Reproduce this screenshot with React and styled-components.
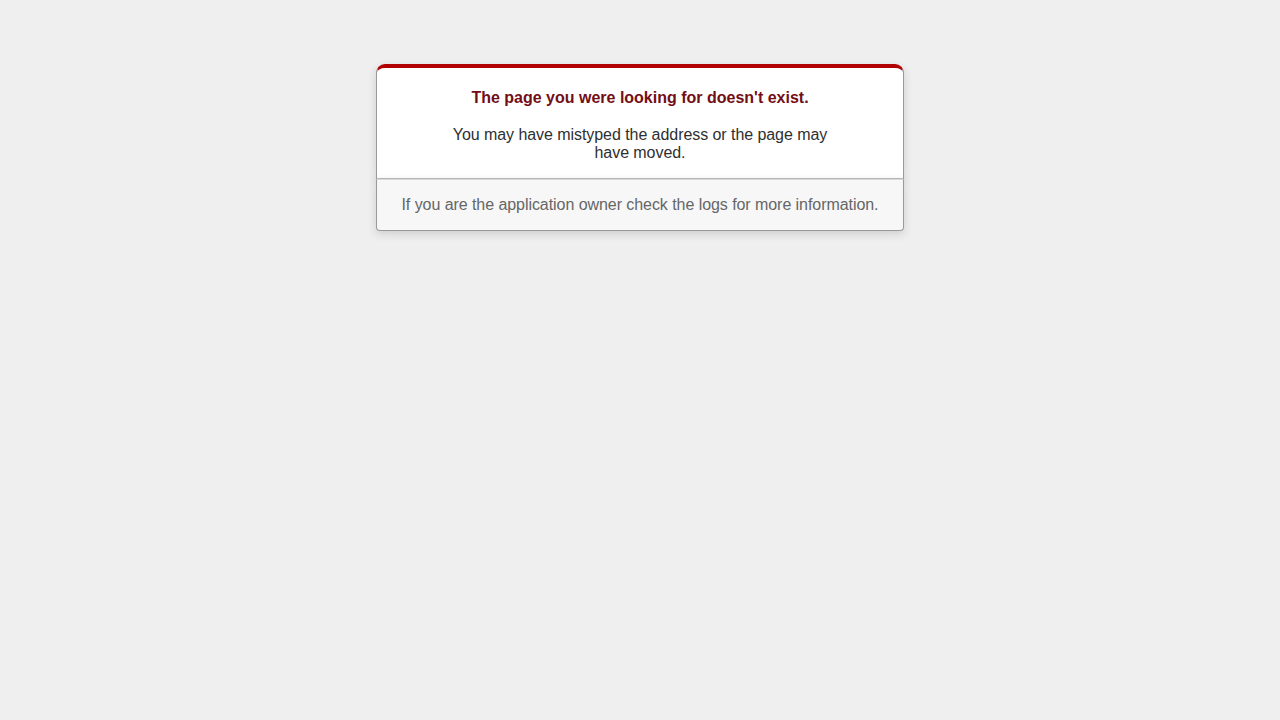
import React from "react";
import styled, { createGlobalStyle } from "styled-components";

const GlobalStyle = createGlobalStyle`
  body {
    background-color: #EFEFEF;
    color: #2E2F30;
    text-align: center;
    font-family: "Liberation Sans", Arial, sans-serif;
    margin: 0;
  }
`;

const Dialog = styled.div`
  width: 95%;
  max-width: 33em;
  margin: 4em auto 0;
`;

const Panel = styled.div`
  border: 1px solid #CCC;
  border-right-color: #999;
  border-left-color: #999;
  border-bottom-color: #BBB;
  border-top: #B00100 solid 4px;
  border-top-left-radius: 9px;
  border-top-right-radius: 9px;
  background-color: white;
  padding: 7px 12% 0;
  box-shadow: 0 3px 8px rgba(50, 50, 50, 0.17);
`;

const Title = styled.h1`
  font-size: 100%;
  color: #730E15;
  line-height: 1.5em;
  margin: 0.67em 0;
`;

const Message = styled.p`
  margin: 1em 0;
  letter-spacing: -0.06px;
`;

const Footer = styled.p`
  margin: 0 0 1em;
  padding: 1em;
  background-color: #F7F7F7;
  border: 1px solid #CCC;
  border-right-color: #999;
  border-left-color: #999;
  border-bottom-color: #999;
  border-bottom-left-radius: 4px;
  border-bottom-right-radius: 4px;
  border-top-color: #DADADA;
  color: #666;
  letter-spacing: -0.06px;
  box-shadow: 0 3px 8px rgba(50, 50, 50, 0.17);
`;

export default function App() {
  return (
    <>
      <GlobalStyle />
      <Dialog>
        <Panel>
          <Title>The page you were looking for doesn't exist.</Title>
          <Message>You may have mistyped the address or the page may have moved.</Message>
        </Panel>
        <Footer>If you are the application owner check the logs for more information.</Footer>
      </Dialog>
    </>
  );
}
